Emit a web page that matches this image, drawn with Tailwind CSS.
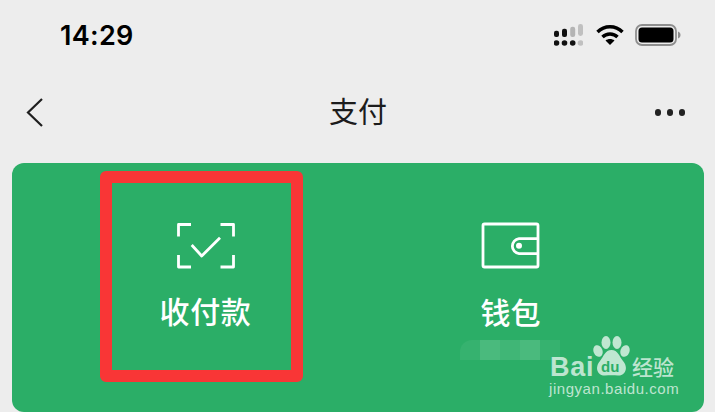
<!DOCTYPE html>
<html lang="zh-CN">
<head>
    <meta charset="UTF-8">
    <title>支付</title>
    <script src="https://cdn.jsdelivr.net/npm/@tailwindcss/browser@4"></script>
</head>
<body class="bg-[#ededed] font-['Noto_Sans_CJK_SC','Noto_Sans',sans-serif] w-[715px] h-[412px] overflow-hidden">

    <!-- status bar -->
    <div class="h-[70px] pl-[60px] pr-[34px] flex items-center justify-between">
        <span class="font-['Inter',sans-serif] font-semibold text-[27px] leading-none tracking-[0.3px] text-black">14:29</span>
        <div class="flex items-center">
            <svg width="29" height="22" viewBox="0 0 29 22">
                <rect x="0" y="6.700" width="5" height="6.300" rx="2" fill="#111"/>
                <rect x="8" y="4.700" width="5" height="8.300" rx="2" fill="#111"/>
                <rect x="16.200" y="2.700" width="5" height="10.300" rx="2.200" fill="#b4b4b4"/>
                <rect x="24" y="0" width="5" height="12" rx="2.400" fill="#c0c0c0"/>
                <circle cx="2.500" cy="19" r="2.800" fill="#111"/>
                <circle cx="10.500" cy="19" r="2.800" fill="#111"/>
                <circle cx="18.700" cy="19" r="2.800" fill="#111"/>
                <circle cx="26.500" cy="19" r="2.800" fill="#c0c0c0"/>
            </svg>
            <svg width="28" height="22" viewBox="0 0 28 22" class="ml-[13px]">
                <path d="M1.500 8C8.500 1 19.500 1 26.500 8" fill="none" stroke="#000" stroke-width="3.400"/>
                <path d="M6.500 13C10.500 9 17.500 9 21.500 13" fill="none" stroke="#000" stroke-width="3.400"/>
                <path d="M9.500 16.500C12 14.500 16 14.500 18.500 16.500L14 21Z" fill="#000"/>
            </svg>
            <svg width="46" height="22" viewBox="0 0 46 22" class="ml-[11px]">
                <rect x="1" y="1" width="40" height="20" rx="6" fill="none" stroke="#8e8e8e" stroke-width="1.800"/>
                <rect x="3.500" y="3.500" width="35" height="15" rx="3.500" fill="#000"/>
                <path d="M43 7.500C45 8.500 45.500 9.500 45.500 11C45.500 12.500 45 13.500 43 14.500Z" fill="#8e8e8e"/>
            </svg>
        </div>
    </div>

    <!-- nav bar -->
    <div class="h-[93px] pl-[20px] pr-[30px] flex items-center justify-between relative">
        <svg width="24" height="32" viewBox="0 0 24 32" class="mt-[-8px]">
            <path d="M22 2L8 15.500L22 29" fill="none" stroke="#1f1f1f" stroke-width="2.200"/>
        </svg>
        <h1 class="absolute left-[329px] top-[22px] text-[29px] leading-[36px] font-normal text-[#1c1c1c]">支付</h1>
        <div class="flex gap-[5.500px] mt-[-8px]">
            <span class="w-[6.500px] h-[6.500px] rounded-full bg-[#222]"></span>
            <span class="w-[6.500px] h-[6.500px] rounded-full bg-[#222]"></span>
            <span class="w-[6.500px] h-[6.500px] rounded-full bg-[#222]"></span>
        </div>
    </div>

    <!-- green card -->
    <div class="relative mx-[12px] w-[692px] h-[249px] rounded-[12px] bg-[#2bae67] pt-[59px] px-[41px] text-white">
        <div class="grid grid-cols-2">
            <div class="flex flex-col items-center">
                <svg width="60" height="48" viewBox="0 0 60 48" fill="none" stroke="#fff" stroke-width="2.800" stroke-linejoin="round">
                    <path d="M15 2.500H2.500V14.500"/>
                    <path d="M44.500 2.500H57.500V14.500"/>
                    <path d="M2.500 33V45H15"/>
                    <path d="M57.500 33V45H44.500"/>
                    <path d="M15.700 23L25.700 34L44 15.700"/>
                </svg>
                <span class="mt-[21px] text-[30px] leading-[38px] font-medium tracking-[0.6px]">收付款</span>
            </div>
            <div class="flex flex-col items-center">
                <svg width="60" height="47" viewBox="0 0 60 47" fill="none" stroke="#fff" stroke-width="2.800" stroke-linejoin="round">
                    <rect x="2" y="2" width="55" height="43" rx="1.500"/>
                    <path d="M57 16.700H38A7.500 7.500 0 0 0 38 31.600H57"/>
                    <circle cx="38" cy="23.700" r="3" fill="#fff" stroke="none"/>
                </svg>
                <span class="mt-[23px] text-[30px] leading-[38px] font-medium">钱包</span>
            </div>
        </div>

        <!-- red highlight -->
        <div class="absolute left-[88px] top-[8px] w-[203px] h-[211px] border-[12px] border-[#f93636] rounded-[6px]"></div>

        <!-- blurred mosaic under the wallet label -->
        <div class="absolute left-[448px] top-[177px] flex h-[20px]">
            <span class="w-[20px] bg-white/5 rounded-tl-[12px]"></span>
            <span class="w-[20px] bg-white/15"></span>
            <span class="w-[20px] bg-white/10"></span>
            <span class="w-[20px] bg-white/15"></span>
            <span class="w-[20px] bg-white/5"></span>
        </div>

        <!-- watermark -->
        <div class="absolute left-[536px] top-[172px] w-[150px] h-[70px] text-white/70">
            <svg width="37" height="42" viewBox="0 0 37 42" class="absolute left-[45px] top-[1px]" fill="currentColor">
                <ellipse cx="13" cy="6.500" rx="4.500" ry="6.500"/>
                <ellipse cx="24" cy="6.500" rx="4.500" ry="6.500"/>
                <ellipse cx="5" cy="15" rx="4.500" ry="6" transform="rotate(-20 5 15)"/>
                <ellipse cx="32" cy="15" rx="4.500" ry="6" transform="rotate(20 32 15)"/>
                <path d="M18.500 14C25 14 26 20 30 25C36 32 32 40 25 39.500C21 39 16 39 12 39.500C5 40 1 32 7 25C11 20 12 14 18.500 14Z"/>
            </svg>
            <span class="absolute left-[2px] top-[16px] font-['Liberation_Sans',sans-serif] font-bold text-[27px] leading-[32px] tracking-[0.8px]">Bai</span>
            <span class="absolute left-[53px] top-[24px] font-['Liberation_Sans',sans-serif] font-bold text-[15px] leading-[16px] text-[#2bae67]">du</span>
            <span class="absolute left-[84px] top-[17px] text-[21px] leading-[28px] font-medium">经验</span>
            <span class="absolute left-[1px] top-[45px] font-['Liberation_Sans',sans-serif] text-[15px] leading-[18px] tracking-[0.55px]">jingyan.baidu.com</span>
        </div>
    </div>
</body>
</html>
